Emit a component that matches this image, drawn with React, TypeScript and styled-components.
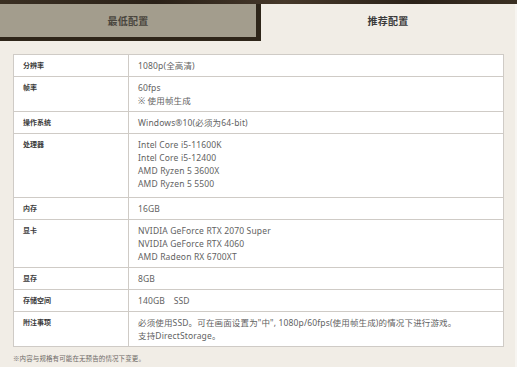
import React from "react";
import styled, { createGlobalStyle } from "styled-components";

const Global = createGlobalStyle`
  html, body { margin: 0; padding: 0; background: #f1ede6; }
  body { font-family: "Noto Sans", "Noto Sans CJK SC", sans-serif; }
`;

const Page = styled.div`
  width: 517px;
  height: 367px;
  overflow: hidden;
  display: flex;
  flex-direction: column;
  background: #f1ede6;
`;

const TopBand = styled.div`
  height: 4px;
  background: linear-gradient(90deg, #3a2f22 0%, #2a2118 30%, #46382a 55%, #2b2219 80%, #3b3023 100%);
`;

const Tabs = styled.div`
  display: flex;
  height: 37px;
`;

const Tab = styled.div<{ $active?: boolean }>`
  flex: 0 0 ${(p) => (p.$active ? "256px" : "261px")};
  display: flex;
  align-items: center;
  justify-content: center;
  box-sizing: border-box;
  font-family: "Noto Sans CJK SC", sans-serif;
  font-size: 10px;
  font-weight: 700;
  letter-spacing: 0.2px;
  color: ${(p) => (p.$active ? "#3a3a3a" : "#4a463e")};
  background: ${(p) => (p.$active ? "#f1ede6" : "#a39d8d")};
  border-bottom: ${(p) => (p.$active ? "none" : "4px solid #2e2519")};
  border-right: ${(p) => (p.$active ? "2px solid #f7f5f1" : "5px solid #2e2519")};
  padding-bottom: ${(p) => (p.$active ? "4px" : "0")};
`;

const Panel = styled.div`
  flex: 1;
  padding: 13px 11px 0 13px;
  border-right: 2px solid #f7f5f1;
`;

const Table = styled.div`
  display: grid;
  grid-template-columns: 115px 1fr;
  background: #ffffff;
  border: 1px solid #cfcbc6;
  border-bottom: none;
`;

const Label = styled.div`
  padding: 4px 9px;
  font-family: "Noto Sans CJK SC", sans-serif;
  font-size: 7px;
  line-height: 13px;
  font-weight: 700;
  color: #3b3b3b;
  border-right: 1px solid #cfcbc6;
  border-bottom: 1px solid #cfcbc6;
`;

const Value = styled.div<{ $extra?: number }>`
  padding: 4px 9px ${(p) => 4 + (p.$extra || 0)}px 9px;
  font-size: 8.5px;
  line-height: 13px;
  color: #626262;
  letter-spacing: 0.15px;
  border-bottom: 1px solid #cfcbc6;
`;

const Line = styled.div`
  white-space: nowrap;
`;

const Note = styled.div`
  margin-top: 6px;
  font-family: "Noto Sans CJK SC", sans-serif;
  font-size: 6.5px;
  color: #6f6b66;
  letter-spacing: 0.1px;
`;

const rows: { label: string; lines: string[]; extra?: number }[] = [
  { label: "分辨率", lines: ["1080p(全高清)"] },
  { label: "帧率", lines: ["60fps", "※ 使用帧生成"] },
  { label: "操作系统", lines: ["Windows®10(必须为64-bit)"] },
  {
    label: "处理器",
    lines: ["Intel Core i5-11600K", "Intel Core i5-12400", "AMD Ryzen 5 3600X", "AMD Ryzen 5 5500"],
    extra: 3,
  },
  { label: "内存", lines: ["16GB"] },
  {
    label: "显卡",
    lines: ["NVIDIA GeForce RTX 2070 Super", "NVIDIA GeForce RTX 4060", "AMD Radeon RX 6700XT"],
  },
  { label: "显存", lines: ["8GB"] },
  { label: "存储空间", lines: ["140GB\u3000SSD"] },
  {
    label: "附注事项",
    lines: [
      "必须使用SSD。可在画面设置为\"中\", 1080p/60fps(使用帧生成)的情况下进行游戏。",
      "支持DirectStorage。",
    ],
  },
];

export default function App() {
  return (
    <Page>
      <Global />
      <TopBand />
      <Tabs>
        <Tab>最低配置</Tab>
        <Tab $active>推荐配置</Tab>
      </Tabs>
      <Panel>
        <Table>
          {rows.map((r) => (
            <React.Fragment key={r.label}>
              <Label>{r.label}</Label>
              <Value $extra={r.extra}>
                {r.lines.map((l) => (
                  <Line key={l}>{l}</Line>
                ))}
              </Value>
            </React.Fragment>
          ))}
        </Table>
        <Note>※内容与规格有可能在无预告的情况下变更。</Note>
      </Panel>
    </Page>
  );
}
